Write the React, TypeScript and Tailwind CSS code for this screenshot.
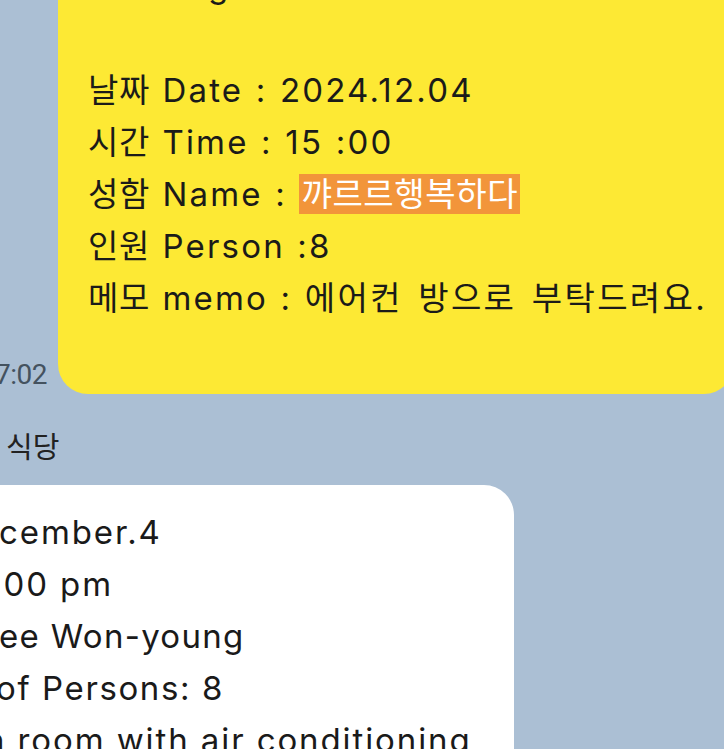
import type { ReactNode } from "react";

const FONT = "font-['Inter','Noto_Sans_CJK_KR',sans-serif]";

function Line({ children, className = "" }: { children?: ReactNode; className?: string }) {
  return <div className={`h-[52px] whitespace-nowrap leading-[52px] ${className}`}>{children}</div>;
}

// Hangul runs sit tighter than the Latin ones
function K({ children, className = "" }: { children: ReactNode; className?: string }) {
  return <span className={`tracking-[0.6px] ${className}`}>{children}</span>;
}

export default function App() {
  return (
    <div className={`h-[749px] w-[724px] overflow-hidden bg-[#abbfd4] ${FONT}`}>
      {/* my message */}
      <div className="-mt-[60px] flex items-end">
        <div className="flex w-[58px] shrink-0 justify-end pb-[3px] pr-[11px]">
          <span className="whitespace-nowrap font-['Roboto',sans-serif] text-[28px] leading-[32px] tracking-[-0.5px] text-[#44525f]">
            오후 7:02
          </span>
        </div>
        <div className="w-[676px] shrink-0 rounded-[30px] bg-[#fde934] pb-[70px] pl-[30px] pt-[20px] text-[33px] tracking-[2.2px] text-[#1b1b19] [word-spacing:1px]">
          <Line>Booking</Line>
          <Line />
          <Line>
            <K>날짜</K> Date : 2024.12.04
          </Line>
          <Line>
            <K>시간</K> Time : 15 :00
          </Line>
          <Line>
            <K>성함</K> Name :{" "}
            <K className="bg-[#f2953a] px-[2px] text-white">꺄르르행복하다</K>
          </Line>
          <Line>
            <K>인원</K> Person :8
          </Line>
          <Line>
            <K>메모</K> memo :{" "}
            <K className="tracking-[2.3px] [word-spacing:4px]">에어컨 방으로 부탁드려요.</K>
          </Line>
        </div>
      </div>

      {/* reply from the restaurant */}
      <div className="mt-[38px] pl-[6px] text-[29px] leading-[32px] text-[#222]">식당</div>
      <div className="mt-[21px] w-[514px] rounded-tr-[30px] bg-white pb-[40px] pt-[21px] text-[33px] tracking-[1.9px] text-[#1a1a1a]">
        <Line className="-ml-[1px]">cember.4</Line>
        <Line className="-ml-[8px]">:00 pm</Line>
        <Line className="-ml-[1px] tracking-[1.3px]">ee Won-young</Line>
        <Line className="-ml-[4px] tracking-[1.6px]">of Persons: 8</Line>
        <Line className="-ml-[15px]">n room with air conditioning</Line>
      </div>
    </div>
  );
}
